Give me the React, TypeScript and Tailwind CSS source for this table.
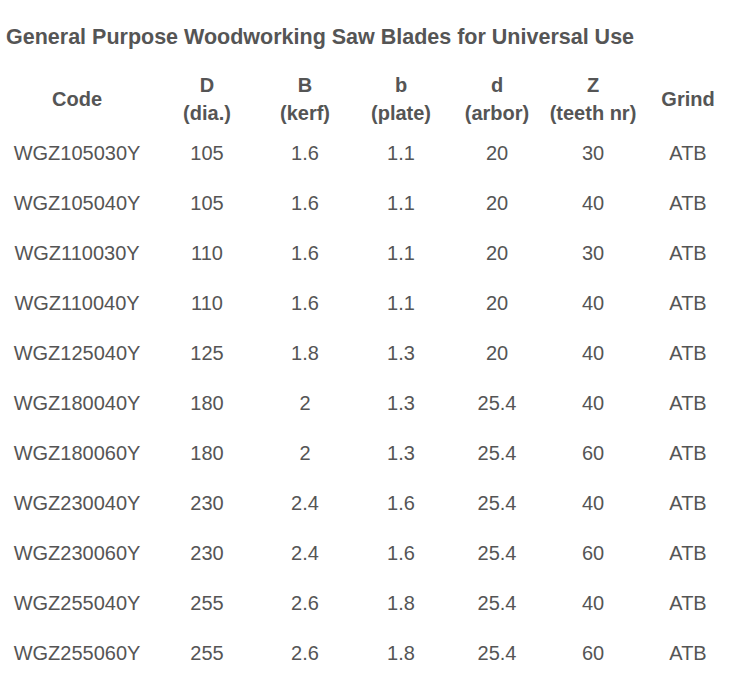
import React from 'react';

// --- Data ---
type Blade = {
  code: string;
  dia: string;
  kerf: string;
  plate: string;
  arbor: string;
  teeth: string;
  grind: string;
};

const blades: Blade[] = [
  { code: 'WGZ105030Y', dia: '105', kerf: '1.6', plate: '1.1', arbor: '20', teeth: '30', grind: 'ATB' },
  { code: 'WGZ105040Y', dia: '105', kerf: '1.6', plate: '1.1', arbor: '20', teeth: '40', grind: 'ATB' },
  { code: 'WGZ110030Y', dia: '110', kerf: '1.6', plate: '1.1', arbor: '20', teeth: '30', grind: 'ATB' },
  { code: 'WGZ110040Y', dia: '110', kerf: '1.6', plate: '1.1', arbor: '20', teeth: '40', grind: 'ATB' },
  { code: 'WGZ125040Y', dia: '125', kerf: '1.8', plate: '1.3', arbor: '20', teeth: '40', grind: 'ATB' },
  { code: 'WGZ180040Y', dia: '180', kerf: '2', plate: '1.3', arbor: '25.4', teeth: '40', grind: 'ATB' },
  { code: 'WGZ180060Y', dia: '180', kerf: '2', plate: '1.3', arbor: '25.4', teeth: '60', grind: 'ATB' },
  { code: 'WGZ230040Y', dia: '230', kerf: '2.4', plate: '1.6', arbor: '25.4', teeth: '40', grind: 'ATB' },
  { code: 'WGZ230060Y', dia: '230', kerf: '2.4', plate: '1.6', arbor: '25.4', teeth: '60', grind: 'ATB' },
  { code: 'WGZ255040Y', dia: '255', kerf: '2.6', plate: '1.8', arbor: '25.4', teeth: '40', grind: 'ATB' },
  { code: 'WGZ255060Y', dia: '255', kerf: '2.6', plate: '1.8', arbor: '25.4', teeth: '60', grind: 'ATB' },
];

const headers: { top: string; sub?: string }[] = [
  { top: 'Code' },
  { top: 'D', sub: '(dia.)' },
  { top: 'B', sub: '(kerf)' },
  { top: 'b', sub: '(plate)' },
  { top: 'd', sub: '(arbor)' },
  { top: 'Z', sub: '(teeth nr)' },
  { top: 'Grind' },
];

const cols = 'grid grid-cols-[140px_120px_76px_116px_76px_116px_74px]';

export default function App() {
  return (
    <div className="w-[737px] h-[677px] bg-white text-[#555555] font-['Liberation_Sans',Arial,sans-serif] pl-[7px]">
      <h1 className="pt-[24px] text-[21.5px] leading-[26px] font-bold -ml-px">
        General Purpose Woodworking Saw Blades for Universal Use
      </h1>

      <div className="mt-[20px]">
        {/* Header */}
        <div className={`${cols} h-[58px] items-center`}>
          {headers.map((h) => (
            <div key={h.top} className="text-center text-[20px] leading-[28px] font-bold">
              <div>{h.top}</div>
              {h.sub && <div>{h.sub}</div>}
            </div>
          ))}
        </div>

        {/* Rows */}
        {blades.map((b) => (
          <div key={b.code} className={`${cols} h-[50px] items-center text-[20px] leading-[28px] text-center`}>
            <div>{b.code}</div>
            <div>{b.dia}</div>
            <div>{b.kerf}</div>
            <div>{b.plate}</div>
            <div>{b.arbor}</div>
            <div>{b.teeth}</div>
            <div>{b.grind}</div>
          </div>
        ))}
      </div>
    </div>
  );
}
